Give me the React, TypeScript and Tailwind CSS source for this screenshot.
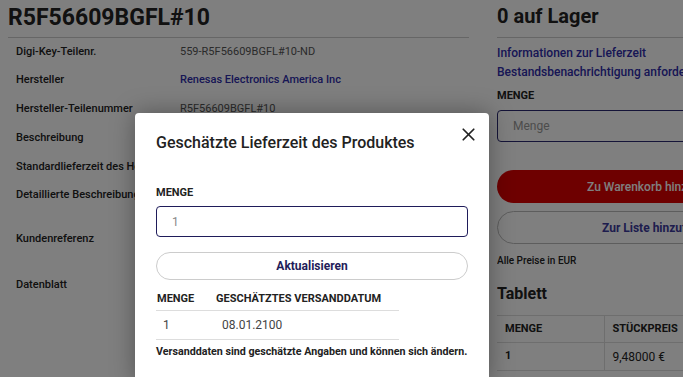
import { X } from "lucide-react";

const specs = [
  { label: "Digi-Key-Teilenr.", value: "559-R5F56609BGFL#10-ND", h: "h-[28px]" },
  { label: "Hersteller", value: "Renesas Electronics America Inc", link: true, h: "h-[29px]" },
  { label: "Hersteller-Teilenummer", value: "R5F56609BGFL#10", h: "h-[29px]" },
  { label: "Beschreibung", value: "", h: "h-[29px]" },
  { label: "Standardlieferzeit des Herstellers", value: "", h: "h-[28px]" },
  { label: "Detaillierte Beschreibung", value: "", h: "h-[28px]" },
  { label: "Kundenreferenz", value: "", h: "h-[60px]" },
  { label: "Datenblatt", value: "", h: "h-[32px]" },
];

export default function App() {
  return (
    <div className="relative h-[377px] w-[683px] overflow-hidden bg-white font-['Roboto',sans-serif] text-[#222]">
      {/* PAGE */}
      <div className="flex">
        <div className="w-[469px] shrink-0 pl-2">
          <h1 className="h-[38px] border-b border-[#ccc] pt-[2px] text-[23px] font-bold leading-[32px]">
            R5F56609BGFL#10
          </h1>
          <div>
            {specs.map((s) => (
              <div key={s.label} className={`flex items-center ${s.h} text-[11px]`}>
                <div className="w-[172px] shrink-0 overflow-hidden whitespace-nowrap pl-2 font-medium">
                  {s.label}
                </div>
                <div className={s.link ? "font-medium text-[#2e2caa]" : "text-[#555]"}>
                  {s.value}
                </div>
              </div>
            ))}
          </div>
        </div>

        <div className="ml-[28px] w-[200px] shrink-0 overflow-hidden">
          <div className="w-[260px]">
            <h2 className="h-[38px] border-b border-[#ccc] pt-[1px] text-[20px] font-bold leading-[30px]">
              0 auf Lager
            </h2>
            <div className="pt-[6px] text-[12px] font-medium text-[#2e2caa]">
              <p className="leading-[19px]">Informationen zur Lieferzeit</p>
              <p className="leading-[19px]">Bestandsbenachrichtigung anfordern</p>
            </div>
            <p className="mt-[8px] text-[11px] font-bold leading-[12px]">MENGE</p>
            <div className="mt-[8px] flex h-[32px] items-center rounded border border-[#2a2870] px-[15px] text-[12px] text-[#999]">
              Menge
            </div>
            <div className="mt-[28px] flex h-[33px] items-center rounded-full bg-[#dc0000] pl-[90px] text-[12px] font-medium text-white">
              Zu Warenkorb hinzufügen
            </div>
            <div className="mt-[8px] flex h-[33px] items-center rounded-full border border-[#bbb] bg-white pl-[104px] text-[12px] font-bold text-[#3c3a9c]">
              Zur Liste hinzufügen
            </div>
            <p className="mt-[9px] text-[10px] font-medium">Alle Preise in EUR</p>
            <p className="mt-[14px] text-[16px] font-bold">Tablett</p>
            <table className="mt-[9px] w-[260px] border-collapse text-[11px]">
              <tbody>
                <tr className="h-[27px] border-y border-[#ddd]">
                  <td className="w-[107px] border-r border-[#ddd] pl-[8px] font-bold">MENGE</td>
                  <td className="pl-[8px] font-bold">STÜCKPREIS</td>
                </tr>
                <tr className="h-[28px] border-b border-[#ddd] text-[12px]">
                  <td className="border-r border-[#ddd] pl-[8px] text-[11px] font-bold">1</td>
                  <td className="pl-[8px]">9,48000 €</td>
                </tr>
              </tbody>
            </table>
          </div>
        </div>
      </div>

      {/* OVERLAY */}
      <div className="absolute inset-0 bg-black/50" />

      {/* MODAL */}
      <div className="absolute left-[135px] top-[113px] w-[354px] rounded-t bg-white px-[21px] pb-6 shadow-[0_0_24px_rgba(0,0,0,0.35)]">
        <button className="absolute right-[10px] top-[11px] text-[#222]">
          <X className="h-[21px] w-[21px]" strokeWidth={2} />
        </button>
        <h3 className="pt-[20px] text-[16px] font-medium leading-[20px] text-[#222]">
          Geschätzte Lieferzeit des Produktes
        </h3>
        <p className="mt-[34px] text-[11px] font-bold leading-[12px] text-[#222]">MENGE</p>
        <div className="mt-[7px] flex h-[31px] w-[312px] items-center rounded border border-[#1f1c5a] px-[15px] text-[12px] text-[#888]">
          1
        </div>
        <div className="mt-[15px] flex h-[28px] w-[312px] items-center justify-center rounded-full border border-[#ccc] text-[12px] font-bold text-[#1f1c5a]">
          Aktualisieren
        </div>
        <table className="mt-[8px] w-[243px] border-collapse text-[#222]">
          <tbody>
            <tr className="h-[22px] border-b border-[#ddd] text-[11px] font-bold">
              <td className="w-[60px] pl-[1px]">MENGE</td>
              <td>GESCHÄTZTES VERSANDDATUM</td>
            </tr>
            <tr className="h-[29px] border-b border-[#ddd] text-[12px] text-[#444]">
              <td className="pl-[7px]">1</td>
              <td className="pl-[6px]">08.01.2100</td>
            </tr>
          </tbody>
        </table>
        <p className="mt-[5px] text-[10.7px] font-bold leading-[14px] text-[#222]">
          Versanddaten sind geschätzte Angaben und können sich ändern.
        </p>
      </div>
    </div>
  );
}
